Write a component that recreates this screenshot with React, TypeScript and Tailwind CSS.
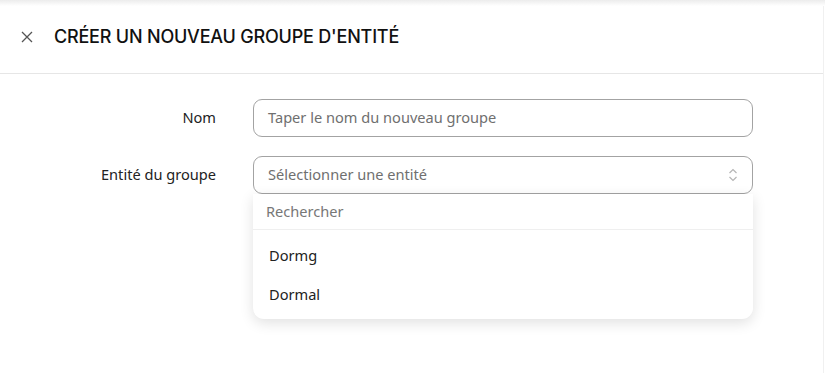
import React from "react";

export default function App() {
  return (
    <div className="w-[825px] h-[373px] bg-white overflow-hidden relative" style={{ fontFamily: "'Noto Sans', sans-serif" }}>
      <div className="pointer-events-none absolute top-0 left-0 right-0 h-[6px] bg-gradient-to-b from-[#ececec] to-white" />
      <div className="w-[824px] h-full border-r border-[#f0f0f0]">
        <div className="h-[74px] border-b border-[#e6e6e6] flex items-center pl-[20px]">
          <svg width="14" height="14" viewBox="0 0 14 14" className="mr-[20px]">
            <path d="M2 2 L12 12 M12 2 L2 12" stroke="#555" strokeWidth="1.3" />
          </svg>
          <h1 className="text-[18px] font-medium text-[#111] tracking-[-0.2px]" style={{ fontFamily: "Inter, sans-serif" }}>
            CRÉER UN NOUVEAU GROUPE D'ENTITÉ
          </h1>
        </div>
        <div className="pt-[25px] flex flex-col gap-[19px]">
          <div className="flex items-center">
            <label className="w-[216px] text-right text-[14.6px] text-[#222]">Nom</label>
            <div className="ml-[37px] w-[500px] h-[38px] border border-[#a3a3a3] rounded-[9px] flex items-center px-[14px] text-[14.6px] text-[#6f6f6f]">
              Taper le nom du nouveau groupe
            </div>
          </div>
          <div className="flex items-start">
            <label className="w-[216px] h-[38px] flex items-center justify-end text-[14.6px] text-[#222]">Entité du groupe</label>
            <div className="ml-[37px] w-[500px] flex flex-col">
              <div className="h-[38px] border border-[#a3a3a3] rounded-[9px] flex items-center justify-between px-[14px] text-[14.6px] text-[#6f6f6f]">
                <span>Sélectionner une entité</span>
                <svg width="10" height="16" viewBox="0 0 10 16">
                  <path d="M1.5 6 L5 2.5 L8.5 6 M1.5 10 L5 13.5 L8.5 10" fill="none" stroke="#b5b5b5" strokeWidth="1.2" />
                </svg>
              </div>
              <div className="bg-white rounded-b-[11px] shadow-[0_4px_14px_rgba(0,0,0,0.12)]">
                <div className="h-[36px] border-b border-[#efefef] flex items-center px-[13px] text-[14.6px] text-[#777]">
                  Rechercher
                </div>
                <div className="pt-[6px] pb-[5px]">
                  <div className="h-[39px] flex items-center px-[16px] text-[14.6px] text-[#222]">Dormg</div>
                  <div className="h-[39px] flex items-center px-[16px] text-[14.6px] text-[#222]">Dormal</div>
                </div>
              </div>
            </div>
          </div>
        </div>
      </div>
    </div>
  );
}
